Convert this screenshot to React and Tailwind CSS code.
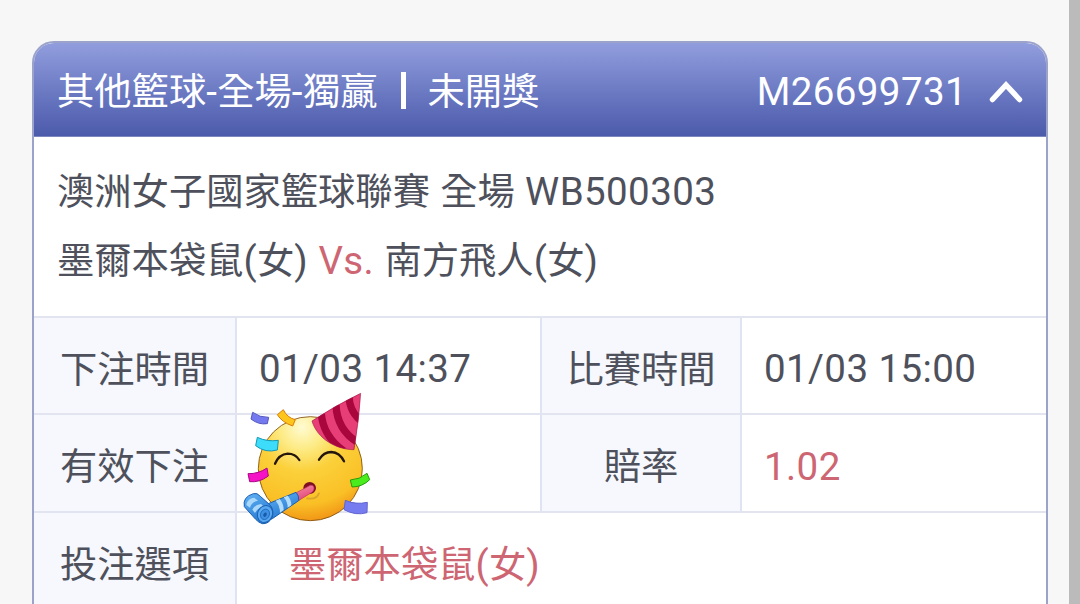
import React from 'react';

function PartyFace() {
  return (
    <svg viewBox="0 0 435 435" className="absolute -left-0.5 -top-[30px] z-10 h-[145px] w-[145px] max-w-none">
      <defs>
        <radialGradient id="face" cx="0.42" cy="0.1" r="0.95">
          <stop offset="0" stopColor="#fffbd2" />
          <stop offset="0.22" stopColor="#fdeb86" />
          <stop offset="0.45" stopColor="#fbd03a" />
          <stop offset="0.78" stopColor="#fac026" />
          <stop offset="1" stopColor="#ef8b12" />
        </radialGradient>
        <linearGradient id="horn" x1="0" y1="0" x2="0.5" y2="1">
          <stop offset="0" stopColor="#63b4f5" />
          <stop offset="1" stopColor="#2678d2" />
        </linearGradient>
        <linearGradient id="pipe" x1="0" y1="0" x2="0.4" y2="1">
          <stop offset="0" stopColor="#f88aa8" />
          <stop offset="1" stopColor="#e04878" />
        </linearGradient>
        <clipPath id="hat">
          <path d="M377 25 Q372 105 357 194 C305 194 247 162 231 108 Q300 62 377 25Z" />
        </clipPath>
      </defs>

      <circle cx="226" cy="251" r="156" fill="url(#face)" stroke="#7b4a0c" strokeWidth="2.5" />

      {/* eyes */}
      <g fill="none" stroke="#24160c" strokeWidth="7" strokeLinecap="round">
        <path d="M120 236 Q132 208 158 206 Q181 206 193 225" />
        <path d="M252 224 Q266 201 289 201 Q314 202 327 229" />
      </g>

      {/* party hat */}
      <g clipPath="url(#hat)">
        <rect x="220" y="15" width="170" height="190" fill="#e83e77" />
        <g fill="none" stroke="#a8063d" strokeWidth="22">
          <path d="M259 86 Q264 152 326 198" />
          <path d="M303 60 Q306 134 368 172" />
          <path d="M342 34 Q344 84 384 112" />
        </g>
      </g>
      <path d="M377 25 Q372 105 357 194 C305 194 247 162 231 108 Q300 62 377 25Z" fill="none" stroke="#a51a49" strokeWidth="2" />

      {/* mouth */}
      <path d="M216 340 Q244 345 252 325" fill="none" stroke="#d9a52a" strokeWidth="5" strokeLinecap="round" />
      <ellipse cx="224" cy="309" rx="19" ry="18" fill="#7d1022" />

      {/* party horn */}
      <path d="M184 323 L226 301 Q238 299 237 312 Q236 320 229 323 L192 346Z" fill="url(#pipe)" stroke="#bf3263" strokeWidth="2" />
      <path d="M100 356 L183 322 Q193 332 191 347 L112 401 Q95 410 84 404Z" fill="url(#horn)" stroke="#1b5fae" strokeWidth="3" />
      <path d="M122 347 L134 342 Q146 356 146 375 L135 383 Q135 361 122 347Z M146 337 L158 332 Q170 346 169 361 L158 368 Q158 350 146 337Z" fill="#b3dcfb" />
      <path d="M55 326 Q66 322 76 334 L103 358 Q118 372 112 396 Q101 418 82 416 Q71 413 62 403 L28 365 Q22 336 55 326Z" fill="url(#horn)" stroke="#1b5fae" strokeWidth="3" />
      <path d="M35 355 Q40 340 58 338 L69 347 Q49 351 45 368 L34 360Z M52 374 Q59 359 78 357 L86 364 Q67 369 60 384Z" fill="#a9d8fa" />
      <ellipse cx="90" cy="387" rx="22" ry="26" transform="rotate(25 90 387)" fill="#58a7ef" stroke="#1b62b5" strokeWidth="3" />
      <ellipse cx="90" cy="388" rx="13" ry="16" transform="rotate(25 90 388)" fill="#3e91e2" stroke="#1a67bd" strokeWidth="2.5" />
      <ellipse cx="90" cy="389" rx="5" ry="7" transform="rotate(25 90 389)" fill="#195ba9" />

      {/* confetti */}
      <g strokeWidth="3" strokeLinejoin="round">
        <path d="M53 82 Q74 98 101 97 L97 116 Q70 120 48 102Z" fill="#7479ef" stroke="#5357bd" />
        <path d="M145 74 Q156 98 181 104 L173 123 Q141 112 127 89Z" fill="#fec51c" stroke="#d97c08" />
        <path d="M67 157 Q96 171 130 166 L127 195 Q91 205 62 182Z" fill="#3ddcfa" stroke="#1597b4" />
        <path d="M39 266 Q70 267 96 249 L100 273 Q73 293 44 290Z" fill="#f613c5" stroke="#a70786" />
        <path d="M346 285 Q374 284 396 265 L404 284 Q382 306 351 306Z" fill="#4aec1e" stroke="#249b0c" />
        <path d="M331 346 Q361 360 397 352 L396 383 Q362 393 327 374Z" fill="#767cf0" stroke="#6065cf" />
      </g>
    </svg>
  );
}

// Roboto runs slightly smaller than the CJK glyphs, so it gets its own size
function Latin({ children }) {
  return <span className="text-[38.5px] leading-none tracking-[0.4px]">{children}</span>;
}

function Label({ children }) {
  return (
    <div className="flex items-center justify-center border-r-2 border-[#e0e3f1] bg-[#f6f8fd] pt-2.5">
      {children}
    </div>
  );
}

export default function App() {
  return (
    <div className="flex h-[604px] w-[1080px] overflow-hidden bg-[#f7f7f7] font-[Roboto,'Noto_Sans_CJK_TC',sans-serif] text-[37.3px] leading-none whitespace-nowrap text-[#4e515c]">
      <main className="flex-1 pt-[41px] pr-[21px] pl-8">
        <section className="h-[620px] overflow-hidden rounded-t-[22px] border-2 border-[#9ba3cb] bg-white">
          <header className="flex h-[94px] items-center border-b border-[#7c88bd] bg-linear-to-b from-[#919ddd] to-[#4c5aab] pr-[23px] pl-[23px] text-white">
            <span className="pt-1.5">其他籃球<Latin>-</Latin>全場<Latin>-</Latin>獨贏</span>
            <span className="mt-0.5 mr-[21px] ml-6 h-[37px] w-[5px] bg-white" />
            <span className="pt-1.5">未開獎</span>
            <span className="ml-auto pt-1.5"><Latin>M26699731</Latin></span>
            <svg viewBox="0 0 34 24" className="mt-1 ml-[22px] h-6 w-[34px]" fill="none" stroke="currentColor" strokeWidth="5.5" strokeLinecap="round">
              <path d="M3.5 19.5 L17 5 L30.5 19.5" />
            </svg>
          </header>

          <div className="h-[179px] pt-[21px] pl-[23px] leading-[69px] [word-spacing:1px]">
            <p>澳洲女子國家籃球聯賽 全場 <Latin>WB500303</Latin></p>
            <p>墨爾本袋鼠<Latin>(</Latin>女<Latin>)</Latin> <span className="text-[#cd6672]"><Latin>Vs.</Latin></span> 南方飛人<Latin>(</Latin>女<Latin>)</Latin></p>
          </div>

          <div className="grid grid-cols-[203px_305px_200px_1fr] grid-rows-[97px_98px_98px]">
            <div className="col-span-4 row-start-1 grid grid-cols-subgrid border-t-2 border-[#e2e4f0]">
              <Label>下注時間</Label>
              <div className="flex items-center border-r-2 border-[#e0e3f1] pt-2 pl-[22px]"><Latin>01/03 14:37</Latin></div>
              <Label>比賽時間</Label>
              <div className="flex items-center pt-2 pl-[22px]"><Latin>01/03 15:00</Latin></div>
            </div>
            <div className="col-span-4 grid grid-cols-subgrid border-t-2 border-[#e2e4f0]">
              <Label>有效下注</Label>
              <div className="relative border-r-2 border-[#e0e3f1]"><PartyFace /></div>
              <Label>賠率</Label>
              <div className="flex items-center pt-2 pl-[22px] text-[#cd6672]"><Latin>1.02</Latin></div>
            </div>
            <div className="col-span-4 grid grid-cols-subgrid border-t-2 border-[#e2e4f0]">
              <Label>投注選項</Label>
              <div className="col-span-3 flex items-center pt-2 pl-[52px] text-[#cd6672]">
                <span>墨爾本袋鼠<Latin>(</Latin>女<Latin>)</Latin></span>
              </div>
            </div>
          </div>
        </section>
      </main>
      <div className="w-[11px] bg-[#bbb]" />
    </div>
  );
}
